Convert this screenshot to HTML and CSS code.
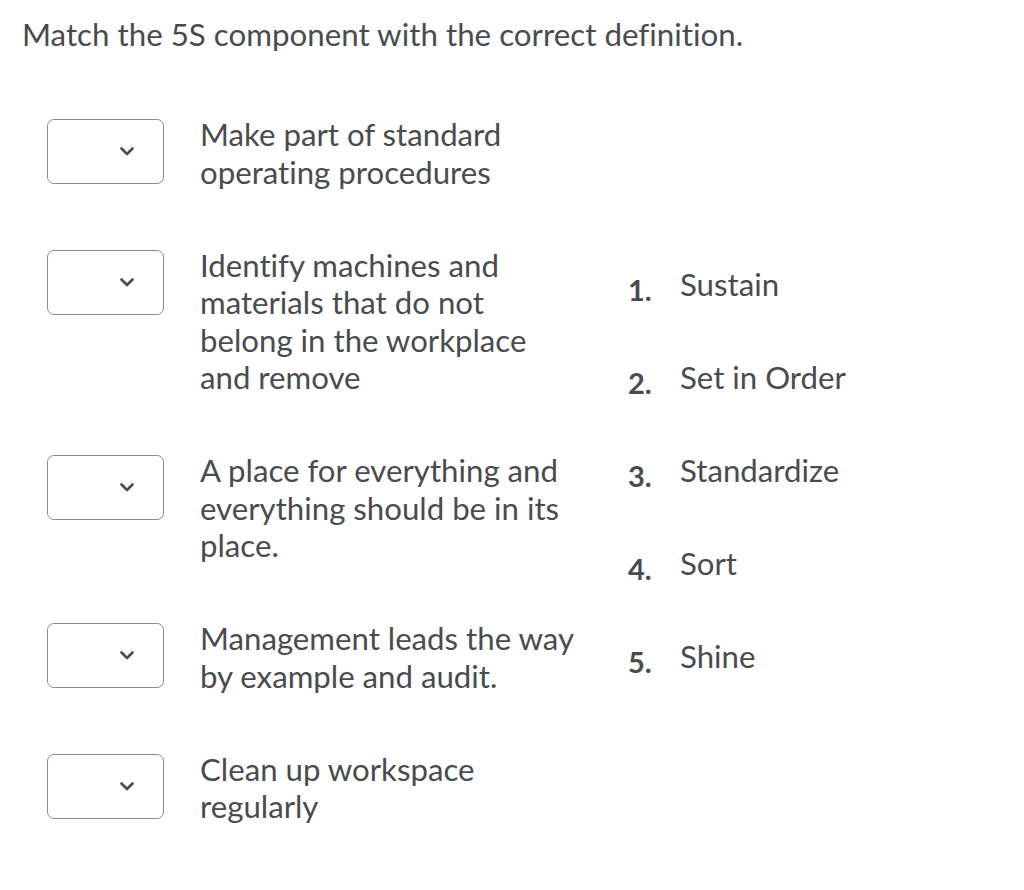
FILE: index.html
```html
<!DOCTYPE html>
<html>
<head>
<meta charset="utf-8">
<link rel="stylesheet" href="styles.css">
</head>
<body>
<div class="page">
  <h1 class="title">Match the 5S component with the correct definition.</h1>
  <div class="match">
    <div class="left">
      <div class="row">
        <div class="select"><svg class="chev" viewBox="0 0 14 9" width="14" height="9"><path d="M1.5 1.5 L7 7 L12.5 1.5" fill="none" stroke="#494c4e" stroke-width="2.6" stroke-linecap="round" stroke-linejoin="round"/></svg></div>
        <div class="def">Make part of standard<br>operating procedures</div>
      </div>
      <div class="row">
        <div class="select"><svg class="chev" viewBox="0 0 14 9" width="14" height="9"><path d="M1.5 1.5 L7 7 L12.5 1.5" fill="none" stroke="#494c4e" stroke-width="2.6" stroke-linecap="round" stroke-linejoin="round"/></svg></div>
        <div class="def">Identify machines and<br>materials that do not<br>belong in the workplace<br>and remove</div>
      </div>
      <div class="row">
        <div class="select"><svg class="chev" viewBox="0 0 14 9" width="14" height="9"><path d="M1.5 1.5 L7 7 L12.5 1.5" fill="none" stroke="#494c4e" stroke-width="2.6" stroke-linecap="round" stroke-linejoin="round"/></svg></div>
        <div class="def">A place for everything and<br>everything should be in its<br>place.</div>
      </div>
      <div class="row">
        <div class="select"><svg class="chev" viewBox="0 0 14 9" width="14" height="9"><path d="M1.5 1.5 L7 7 L12.5 1.5" fill="none" stroke="#494c4e" stroke-width="2.6" stroke-linecap="round" stroke-linejoin="round"/></svg></div>
        <div class="def">Management leads the way<br>by example and audit.</div>
      </div>
      <div class="row">
        <div class="select"><svg class="chev" viewBox="0 0 14 9" width="14" height="9"><path d="M1.5 1.5 L7 7 L12.5 1.5" fill="none" stroke="#494c4e" stroke-width="2.6" stroke-linecap="round" stroke-linejoin="round"/></svg></div>
        <div class="def">Clean up workspace<br>regularly</div>
      </div>
    </div>
    <ol class="choices">
      <li><span class="num">1.</span><span class="txt">Sustain</span></li>
      <li><span class="num">2.</span><span class="txt">Set in Order</span></li>
      <li><span class="num">3.</span><span class="txt">Standardize</span></li>
      <li><span class="num">4.</span><span class="txt">Sort</span></li>
      <li><span class="num">5.</span><span class="txt">Shine</span></li>
    </ol>
  </div>
</div>
</body>
</html>
```
FILE: styles.css
```css
html, body {
  margin: 0;
  padding: 0;
  background: #ffffff;
}
body {
  font-family: Lato, "Open Sans", sans-serif;
  color: #494c4e;
  font-variant-ligatures: none;
}
.page {
  padding: 16px 0 0 22px;
}
.title {
  margin: 0;
  font-size: 31.3px;
  font-weight: 400;
  line-height: 37px;
}
.match {
  display: flex;
  margin-top: 63px;
}
.left {
  display: flex;
  flex-direction: column;
  gap: 55.5px;
  width: 585px;
  padding-left: 25px;
  box-sizing: border-box;
}
.row {
  display: flex;
  align-items: flex-start;
}
.select {
  width: 117px;
  height: 65px;
  box-sizing: border-box;
  border: 1.5px solid #8a8c8e;
  border-radius: 7px;
  margin-top: 3px;
  display: flex;
  align-items: center;
  justify-content: flex-end;
  padding-right: 29px;
  flex-shrink: 0;
}
.chev {
  display: block;
}
.def {
  margin-left: 36px;
  font-size: 31.2px;
  line-height: 37.5px;
}
.choices {
  list-style: none;
  margin: 150px 0 0 0;
  padding: 0 0 0 21px;
  display: flex;
  flex-direction: column;
  gap: 55.5px;
}
.choices li {
  display: flex;
  align-items: flex-start;
  font-size: 31.2px;
  line-height: 37.5px;
}
.num {
  font-weight: 700;
  width: 52px;
  font-size: 29px;
  transform: translateY(5px);
}
```
